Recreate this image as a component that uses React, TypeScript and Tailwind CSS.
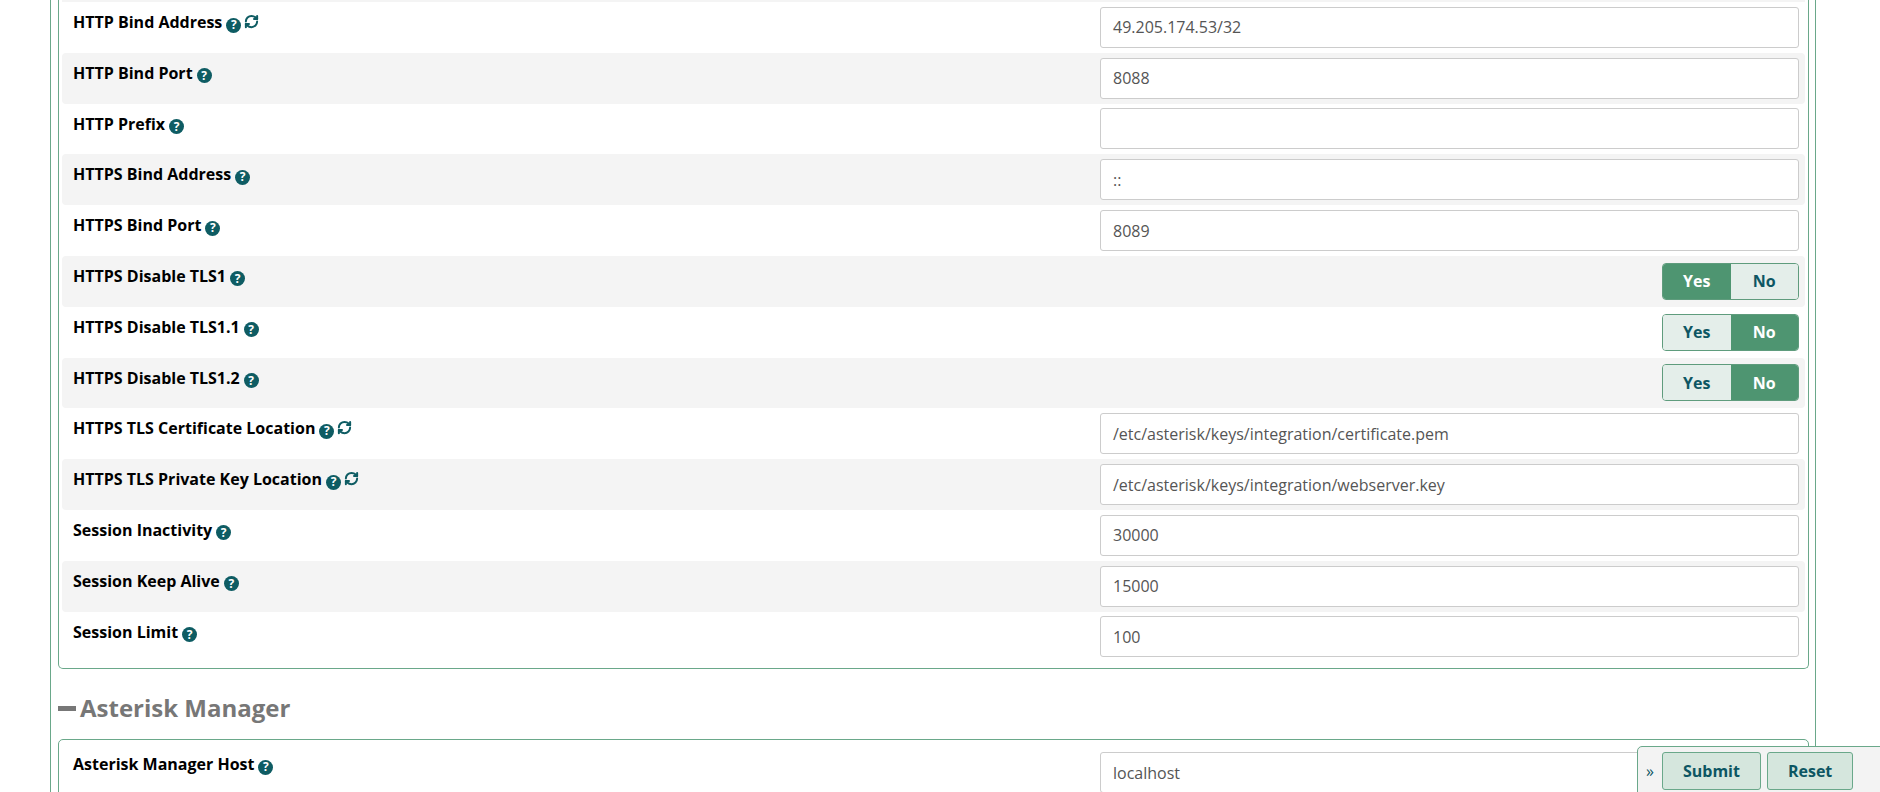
import React from "react";
import { RefreshCw } from "lucide-react";

const Help = () => (
  <span className="inline-flex items-center justify-center w-[15px] h-[15px] rounded-full bg-[#0e5c63] text-white text-[12px] font-bold leading-none ml-[4px] align-[-1px]">?</span>
);
const Ref = () => <RefreshCw className="inline-block w-[15px] h-[15px] text-[#0e5c63] ml-[3px] align-[-1px]" strokeWidth={3.2} />;

type Row = { label: string; refresh?: boolean; value?: string; toggle?: "yes" | "no" };
const rows: Row[] = [
  { label: "HTTP Bind Address", refresh: true, value: "49.205.174.53/32" },
  { label: "HTTP Bind Port", value: "8088" },
  { label: "HTTP Prefix", value: "" },
  { label: "HTTPS Bind Address", value: "::" },
  { label: "HTTPS Bind Port", value: "8089" },
  { label: "HTTPS Disable TLS1", toggle: "yes" },
  { label: "HTTPS Disable TLS1.1", toggle: "no" },
  { label: "HTTPS Disable TLS1.2", toggle: "no" },
  { label: "HTTPS TLS Certificate Location", refresh: true, value: "/etc/asterisk/keys/integration/certificate.pem" },
  { label: "HTTPS TLS Private Key Location", refresh: true, value: "/etc/asterisk/keys/integration/webserver.key" },
  { label: "Session Inactivity", value: "30000" },
  { label: "Session Keep Alive", value: "15000" },
  { label: "Session Limit", value: "100" },
];

const Toggle = ({ v }: { v: "yes" | "no" }) => (
  <div className="flex w-[137px] h-[37px] rounded-[4px] border border-[#5f9c7d] overflow-hidden text-[16px] font-bold">
    <div className={`flex-1 flex items-center justify-center ${v === "yes" ? "bg-[#4e9571] text-white" : "bg-[#e4eeea] text-[#0d5663]"}`}>Yes</div>
    <div className={`flex-1 flex items-center justify-center ${v === "no" ? "bg-[#4e9571] text-white" : "bg-[#e4eeea] text-[#0d5663]"}`}>No</div>
  </div>
);

const Line = ({ r, i }: { r: Row; i: number }) => (
  <div className={`flex h-[50.8px] rounded-[4px] ${i % 2 === 1 ? "bg-[#f4f4f4]" : ""}`}>
    <div className="w-[1038px] pl-[11px] pt-[9px] text-[16px] font-bold text-black leading-[22px]">
      {r.label}<Help />{r.refresh && <Ref />}
    </div>
    <div className="flex-1 flex items-center justify-end pr-[6px]">
      {r.toggle ? (
        <Toggle v={r.toggle} />
      ) : (
        <div className="w-full h-[41px] border border-[#cccccc] rounded-[3px] bg-white flex items-center px-[12px] text-[16px] text-[#555]">{r.value}</div>
      )}
    </div>
  </div>
);

export default function App() {
  return (
    <div className="w-[1880px] h-[792px] overflow-hidden bg-white relative" style={{ fontFamily: "'Open Sans', sans-serif" }}>
      <div className="ml-[50px] w-[1766px] h-[900px] border-l border-r border-[#6aa88a] pl-[7px] pr-[6px]">
        <div className="border border-t-0 border-[#6aa88a] rounded-b-[5px] px-[3px] pb-[6px]">
          <div className="h-[2px] bg-[#f4f4f4]" />
          {rows.map((r, i) => <Line key={i} r={r} i={i} />)}
        </div>
        <div className="h-[70px] flex items-center pt-[8px] text-[24px] font-bold text-[#777]">
          <span className="inline-block w-[18px] h-[5px] bg-[#777] mr-[4px]" />Asterisk Manager
        </div>
        <div className="border border-[#6aa88a] rounded-t-[5px] px-[3px] h-[200px]">
          <div className="flex h-[52px]">
            <div className="w-[1038px] pl-[11px] pt-[13px] text-[16px] font-bold text-black leading-[22px]">Asterisk Manager Host<Help /></div>
            <div className="flex-1 pt-[12px] pr-[6px]">
              <div className="w-full h-[41px] border border-[#cccccc] rounded-[3px] flex items-center px-[12px] text-[16px] text-[#555]">localhost</div>
            </div>
          </div>
        </div>
      </div>
      <div className="absolute left-[1637px] top-[746px] w-[250px] h-[50px] bg-[#f3f3f3] border border-[#6aa88a] rounded-tl-[5px] flex items-center gap-[6px] pl-[8px]">
        <span className="text-[#0d5663] text-[16px] mr-[2px]">»</span>
        <button className="h-[38px] px-[20px] bg-[#d5e6dd] border border-[#6aa88a] rounded-[3px] text-[#0d5663] font-bold text-[16px]">Submit</button>
        <button className="h-[38px] px-[20px] bg-[#d5e6dd] border border-[#6aa88a] rounded-[3px] text-[#0d5663] font-bold text-[16px]">Reset</button>
      </div>
    </div>
  );
}
